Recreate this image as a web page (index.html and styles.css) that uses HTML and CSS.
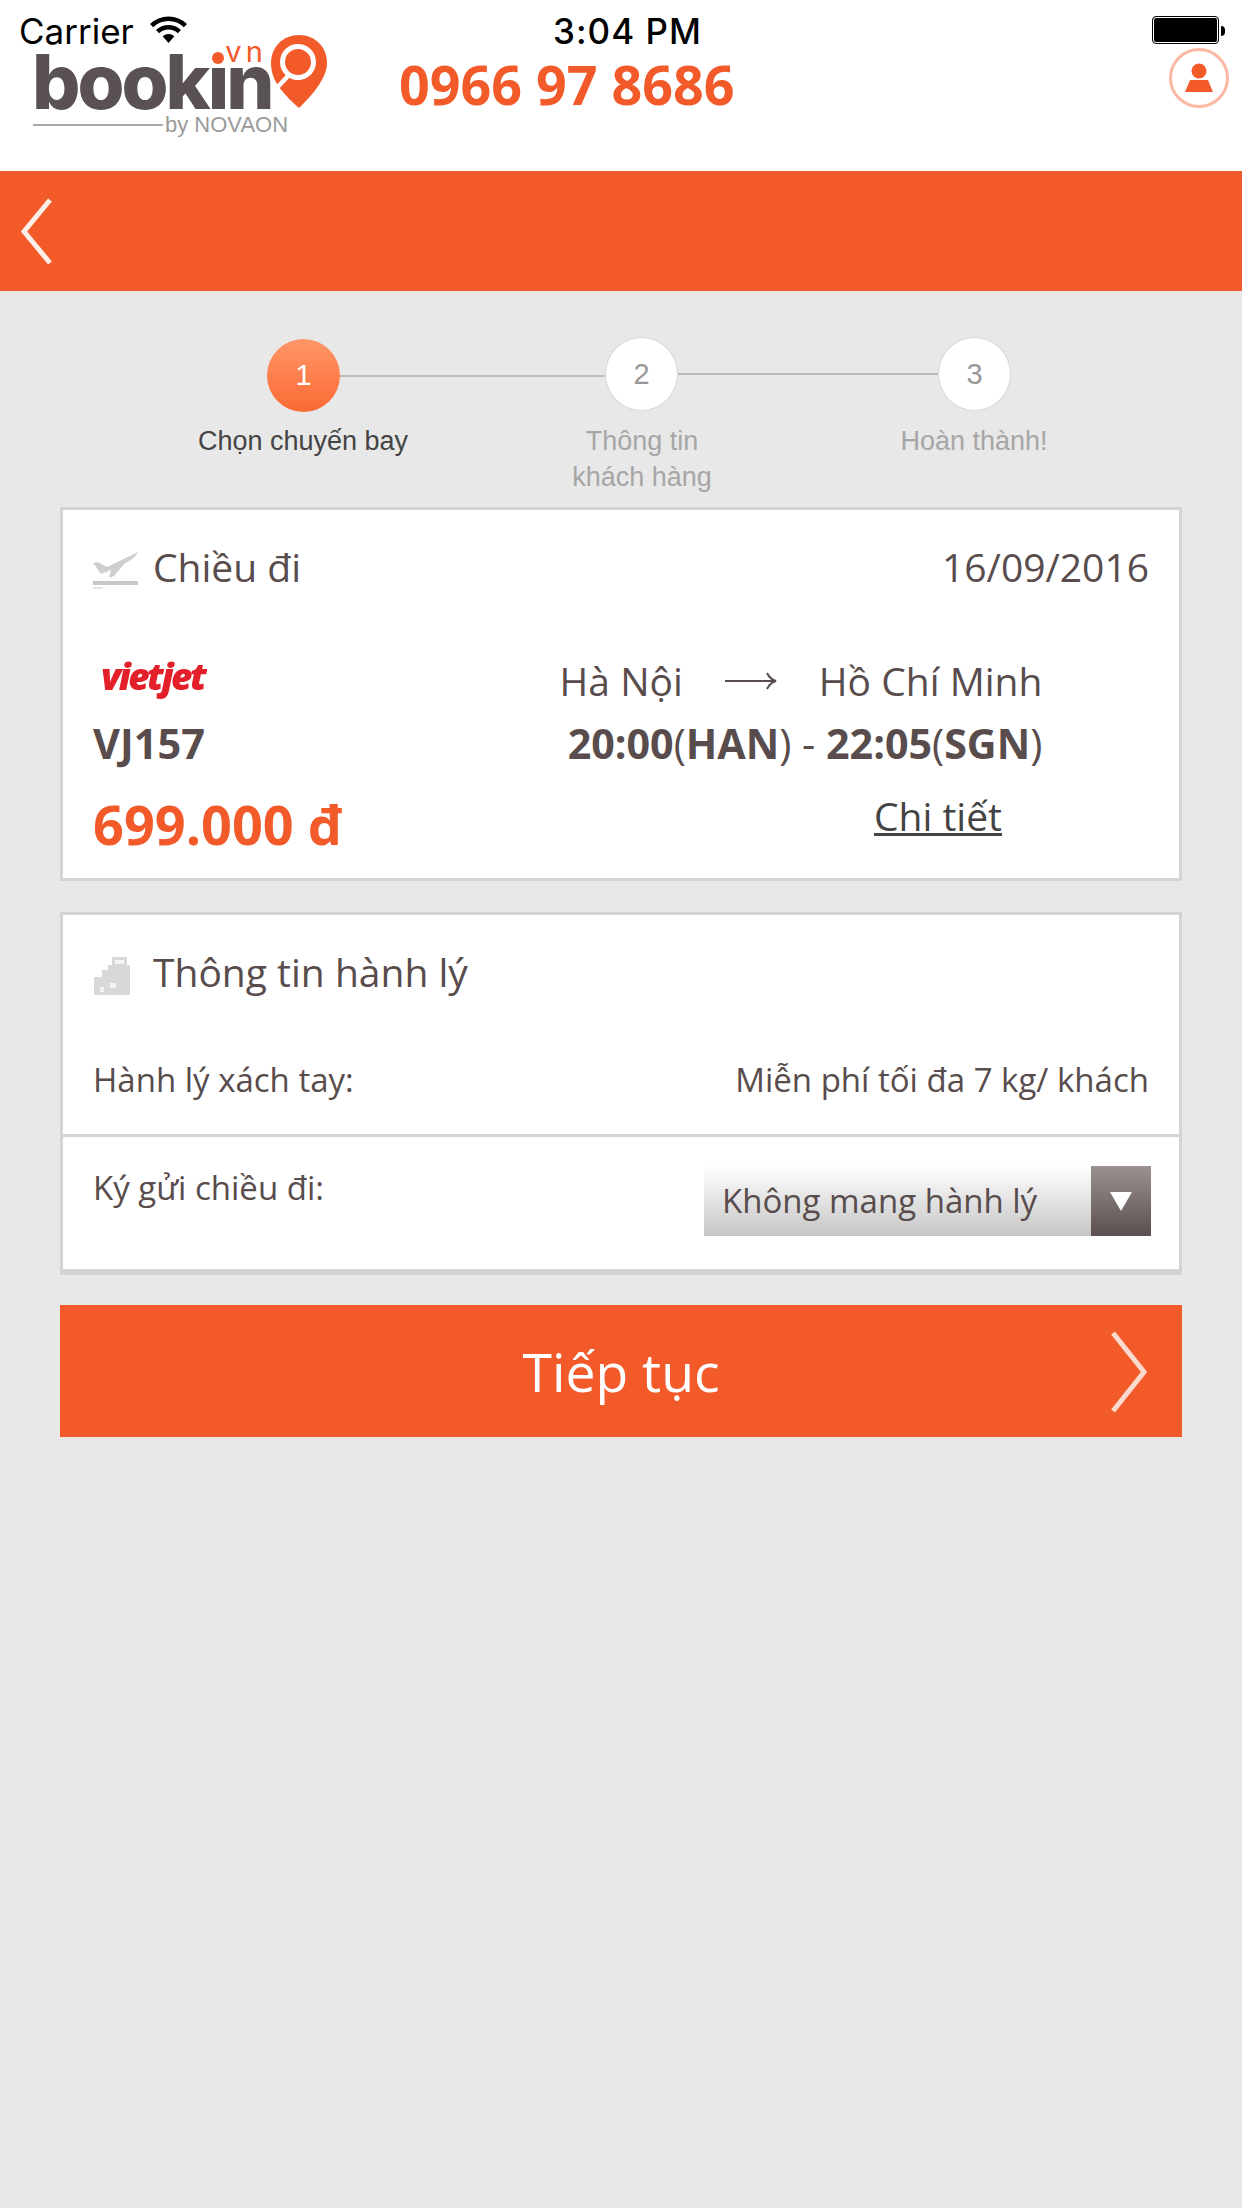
FILE: index.html
```html
<!DOCTYPE html>
<html lang="vi">

<head>
    <meta charset="UTF-8">
    <title>Chọn chuyến bay</title>
    <link rel="stylesheet" href="styles.css">
</head>

<body>
    <!-- status bar lies over the top of the header -->
    <div class="status">
        <span class="carrier">Carrier</span>
        <svg class="wifi" viewBox="0 0 37 27">
            <path d="M18.5 27 L12.6 20.2 A9 9 0 0 1 24.4 20.2 Z" />
            <path d="M7.6 15.6 A16 16 0 0 1 29.4 15.6" fill="none" stroke="#000" stroke-width="4.5" />
            <path d="M1.6 9.6 A24 24 0 0 1 35.4 9.6" fill="none" stroke="#000" stroke-width="4.5" />
        </svg>
        <span class="time">3:04 PM</span>
        <span class="battery"></span>
        <span class="nub"></span>
    </div>

    <header class="header">
        <div class="logo">
            <div class="logo-top">
                <span class="logo-name">bookin</span>
                <span class="logo-vn">.vn</span>
                <svg class="logo-pin" viewBox="0 0 56 73">
                    <path fill="#f35a2a" d="M28 0 C44 0 56 12 56 28 C56 44 40 61 28 73 C22 68 14 60 8 52 C3 45 0 37 0 28 C0 12 12 0 28 0 Z" />
                    <circle cx="27" cy="27" r="15.5" fill="none" stroke="#fff" stroke-width="5" />
                    <path d="M17 41 L2 57" fill="none" stroke="#fff" stroke-width="4.5" />
                </svg>
            </div>
            <div class="logo-sub"><span class="logo-rule"></span>by NOVAON</div>
        </div>
        <div class="phone">0966 97 8686</div>
        <div class="avatar">
            <svg viewBox="0 0 30 30" width="30" height="30">
                <circle cx="15" cy="8" r="7.5" fill="#f35a2a" />
                <path d="M6 17 H24 L29 29 H1 Z" fill="#f35a2a" />
            </svg>
        </div>
    </header>

    <nav class="topbar">
        <svg class="back" viewBox="0 0 31 67">
            <path d="M29 2 L3 33.5 L29 65" fill="none" stroke="#fdeee8" stroke-width="5" />
        </svg>
    </nav>

    <main class="main">
        <div class="steps">
            <span class="dot dot-on">1</span>
            <span class="line line-a"></span>
            <span class="dot">2</span>
            <span class="line line-b"></span>
            <span class="dot">3</span>
        </div>
        <div class="step-names">
            <div class="step-name name-a">Chọn chuyến bay</div>
            <div class="step-name name-b">Thông tin<br>khách hàng</div>
            <div class="step-name name-c">Hoàn thành!</div>
        </div>

        <section class="card">
            <div class="card-head">
                <div class="card-title">
                    <svg class="ico-plane" viewBox="0 0 45 38">
                        <path d="M0 11 L5 10 L14 15 L45 0 C43 5 37 9 31 12 L21 24 L16 26 L18 18 L8 22 Z" fill="#cfcfcf" />
                        <rect x="0" y="29" width="45" height="4" fill="#c8c8c8" />
                        <rect x="0" y="35" width="10" height="2" fill="#e6e6e6" />
                    </svg>
                    Chiều đi
                </div>
                <div class="date">16/09/2016</div>
            </div>
            <div class="flight">
                <div class="flight-left">
                    <div class="airline">vietjet</div>
                    <div class="code">VJ157</div>
                    <div class="price">699.000 đ</div>
                </div>
                <div class="flight-right">
                    <div class="route">
                        <span>Hà Nội</span>
                        <svg class="arrow" viewBox="0 0 52 20">
                            <path d="M0 10 H50 M42 2 C44 6 47 9 51 10 C47 11 44 14 42 18" fill="none" stroke="#584c4c" stroke-width="2" />
                        </svg>
                        <span>Hồ Chí Minh</span>
                    </div>
                    <div class="times"><b>20:00</b>(<b>HAN</b>) - <b>22:05</b>(<b>SGN</b>)</div>
                    <a class="detail" href="#">Chi tiết</a>
                </div>
            </div>
        </section>

        <section class="card card-bag">
            <div class="bag-head">
                <div class="card-title">
                    <svg class="ico-bag" viewBox="0 0 36 38">
                        <path d="M18 0 H33 V8 H36 V38 H0 V20 H8 V13 H14 V8 H18 Z" fill="#d8d8d8" />
                        <rect x="21" y="3" width="9" height="4" fill="#f4f4f4" />
                        <rect x="6" y="30" width="4" height="5" fill="#f4f4f4" />
                        <rect x="16" y="26" width="6" height="5" fill="#f4f4f4" />
                    </svg>
                    Thông tin hành lý
                </div>
            </div>
            <div class="bag-row">
                <span>Hành lý xách tay:</span>
                <span>Miễn phí tối đa 7 kg/ khách</span>
            </div>
            <div class="bag-check">
                <span>Ký gửi chiều đi:</span>
                <div class="select">
                    <span class="select-text">Không mang hành lý</span>
                    <span class="select-btn"><span class="tri"></span></span>
                </div>
            </div>
        </section>

        <button type="button" class="next">
            Tiếp tục
            <svg class="next-ico" viewBox="0 0 36 80">
                <path d="M2 1 L33 40 L2 79" fill="none" stroke="#fbd9cd" stroke-width="5" />
            </svg>
        </button>
    </main>
</body>

</html>
```

FILE: styles.css
```css
html,
body {
    margin: 0;
    height: 100%;
}

body {
    background: #e8e8e8;
    color: #584c4c;
    font-family: "Open Sans", "Noto Sans", sans-serif;
}

/* status bar */
.status {
    position: absolute;
    top: 0;
    left: 0;
    width: 1242px;
    height: 48px;
    color: #000;
    font-family: Inter, "Liberation Sans", sans-serif;
}

.carrier {
    position: absolute;
    left: 19px;
    top: 13px;
    font-size: 35px;
    line-height: 36px;
}

.wifi {
    position: absolute;
    left: 150px;
    top: 16px;
    width: 37px;
    height: 27px;
}

.time {
    position: absolute;
    left: 553px;
    top: 13px;
    font-size: 35px;
    line-height: 36px;
    font-weight: 500;
    letter-spacing: 1px;
}

.battery {
    position: absolute;
    left: 1153px;
    top: 17px;
    width: 63px;
    height: 24px;
    background: #000;
    border: 1px solid #fff;
    outline: 1px solid #000;
    border-radius: 3px;
}

.nub {
    position: absolute;
    left: 1221px;
    top: 26px;
    width: 4px;
    height: 10px;
    background: #000;
    border-radius: 0 5px 5px 0;
}

/* header */
.header {
    display: flex;
    align-items: flex-start;
    height: 171px;
    background: #fff;
}

.logo {
    width: 332px;
    margin: 35px 0 0 33px;
}

.logo-top {
    position: relative;
    display: flex;
    align-items: flex-start;
    height: 78px;
}

.logo-name {
    width: 239px;
    margin: 14px 0 0 -1px;
    font-family: Inter, "Open Sans", sans-serif;
    font-size: 76px;
    line-height: 64px;
    font-weight: 800;
    letter-spacing: -3px;
    color: #5a5156;
}

/* sits on the i of the wordmark, its dot takes the place of the i dot */
.logo-vn {
    position: absolute;
    left: 180px;
    top: 2px;
    font-family: Inter, "Open Sans", sans-serif;
    font-size: 29px;
    line-height: 30px;
    letter-spacing: 4px;
    color: #f35a2a;
}

.logo-vn::before {
    content: "";
    position: absolute;
    left: -1px;
    top: 15px;
    width: 12px;
    height: 12px;
    border-radius: 50%;
    background: #f35a2a;
    box-shadow: 0 0 0 3px #fff;
}

.logo-pin {
    width: 56px;
    height: 73px;
}

.logo-sub {
    display: flex;
    align-items: center;
    gap: 2px;
    color: #9a9a9a;
    font-size: 22px;
    line-height: 24px;
    font-family: "Liberation Sans", sans-serif;
}

.logo-rule {
    width: 130px;
    height: 2px;
    background: #aaa;
}

.phone {
    width: 770px;
    margin: 54px 0 0 34px;
    font-size: 53.8px;
    line-height: 60px;
    font-weight: 700;
    color: #f35a2a;
}

.avatar {
    display: flex;
    align-items: center;
    justify-content: center;
    box-sizing: border-box;
    width: 60px;
    height: 60px;
    margin: 48px 0 0 0;
    border: 3px solid #fbb9a4;
    border-radius: 50%;
}

/* orange bar */
.topbar {
    display: flex;
    align-items: center;
    height: 120px;
    padding-left: 21px;
    background: #f35a2a;
}

.back {
    width: 31px;
    height: 67px;
}

/* steps */
.main {
    padding: 46px 60px 0;
}

.steps {
    display: flex;
    align-items: flex-start;
    margin-left: 207px;
}

.dot {
    display: flex;
    align-items: center;
    justify-content: center;
    box-sizing: border-box;
    width: 73px;
    height: 74px;
    background: #fff;
    border: 1px solid #d8d8d8;
    border-radius: 50%;
    color: #999;
    font-size: 29px;
    font-family: "Liberation Sans", sans-serif;
}

.dot-on {
    margin-top: 2px;
    height: 73px;
    background: linear-gradient(#fe9668, #fb6a33);
    border: none;
    color: #fff;
}

.line {
    height: 2px;
    background: #bbb;
}

.line-a {
    width: 265px;
    margin-top: 38px;
}

.line-b {
    width: 260px;
    margin-top: 36px;
}

.step-names {
    display: flex;
    height: 84px;
    margin-top: 11px;
    font-family: "Liberation Sans", sans-serif;
    font-size: 27px;
    line-height: 36px;
    text-align: center;
    color: #a6a6a6;
}

.step-name {
    width: 240px;
}

.name-a {
    margin-left: 123px;
    color: #444;
}

.name-b {
    margin-left: 99px;
}

.name-c {
    margin-left: 92px;
}

/* cards */
.card {
    box-sizing: border-box;
    width: 1122px;
    background: #fff;
    border: 3px solid #d4d4d4;
}

.card-head {
    display: flex;
    justify-content: space-between;
    align-items: center;
    height: 112px;
    padding: 0 30px;
}

.card-title {
    display: flex;
    align-items: center;
    font-size: 39px;
}

.date {
    font-size: 39px;
}

.ico-plane {
    width: 45px;
    height: 38px;
    margin: 10px 15px 0 0;
    filter: blur(0.7px);
}

.flight {
    display: flex;
    height: 256px;
    padding-left: 30px;
}

.flight-left {
    width: 447px;
    margin-top: 29px;
}

.airline {
    height: 62px;
    padding-left: 8px;
    font-family: "Open Sans", sans-serif;
    font-size: 37px;
    line-height: 50px;
    font-style: italic;
    font-weight: 800;
    letter-spacing: -2.5px;
    color: #e3202a;
    filter: blur(0.5px);
}

.code {
    font-size: 41.5px;
    line-height: 60px;
    font-weight: 700;
}

.price {
    margin-top: 16px;
    font-size: 54px;
    line-height: 70px;
    font-weight: 700;
    color: #f35a2a;
}

.flight-right {
    width: 530px;
    margin-top: 26px;
}

.route {
    display: flex;
    justify-content: center;
    align-items: center;
    gap: 42px;
    height: 65px;
    padding-right: 8px;
    font-size: 39px;
}

.arrow {
    width: 52px;
    height: 20px;
}

.times {
    font-size: 41.2px;
    line-height: 60px;
    text-align: center;
}

.detail {
    display: block;
    width: fit-content;
    margin: 17px 0 0 334px;
    font-size: 39px;
    line-height: 52px;
    color: #444;
}

.card-bag {
    margin-top: 31px;
    height: 363px;
    border-bottom-width: 6px;
}

.bag-head {
    display: flex;
    align-items: center;
    height: 112px;
    padding: 0 30px;
}

.ico-bag {
    width: 36px;
    height: 38px;
    margin: 10px 23px 0 1px;
    filter: blur(0.7px);
}

.bag-row {
    display: flex;
    justify-content: space-between;
    align-items: center;
    height: 105px;
    padding: 0 30px 2px;
    font-size: 33px;
    border-bottom: 3px solid #d4d4d4;
}

.bag-check {
    display: flex;
    justify-content: space-between;
    padding: 29px 28px 0 30px;
    font-size: 33px;
    line-height: 44px;
}

.select {
    display: flex;
    width: 447px;
    height: 72px;
    background: linear-gradient(#fff, #c6c6c6);
    border-bottom: 2px dashed #fff;
    box-sizing: border-box;
}

.select-text {
    flex: 1;
    padding-left: 18px;
    font-size: 33px;
    line-height: 70px;
}

.select-btn {
    display: flex;
    align-items: center;
    justify-content: center;
    width: 60px;
    background: linear-gradient(#9c9191, #5b4f4f);
}

.tri {
    width: 0;
    height: 0;
    border-left: 11px solid transparent;
    border-right: 11px solid transparent;
    border-top: 19px solid #fff;
}

/* next button */
.next {
    display: flex;
    align-items: center;
    justify-content: center;
    position: relative;
    box-sizing: border-box;
    width: 1122px;
    height: 132px;
    margin-top: 30px;
    background: #f35a2a;
    border: none;
    color: #fff;
    font-family: "Open Sans", sans-serif;
    font-size: 53.5px;
}

.next-ico {
    position: absolute;
    right: 35px;
    top: 27px;
    width: 36px;
    height: 80px;
}
```
